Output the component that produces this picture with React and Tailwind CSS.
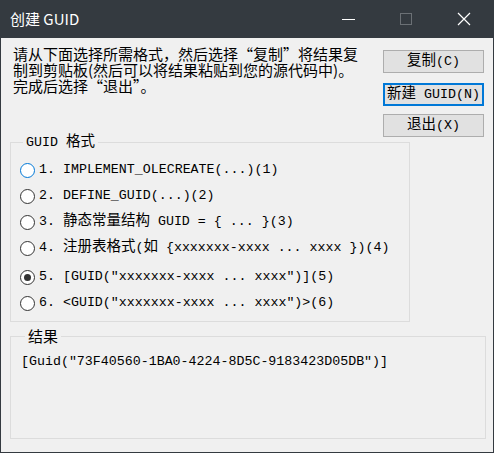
const MONO = "font-['Liberation_Mono','Noto_Sans_CJK_SC',monospace]";
const SANS = "font-['Noto_Sans_CJK_SC','Liberation_Sans',sans-serif]";

const ROWS = [
  { n: 1, label: <>IMPLEMENT_OLECREATE(...)(1)</> },
  { n: 2, label: <>DEFINE_GUID(...)(2)</> },
  { n: 3, label: <><span className="text-[14.5px]">静态常量结构</span> GUID = {'{'} ... {'}'}(3)</> },
  { n: 4, label: <><span className="text-[14.5px]">注册表格式</span>(<span className="text-[14.5px]">如</span> {'{'}xxxxxxx-xxxx ... xxxx {'}'})(4)</> },
  { n: 5, label: <>[GUID("xxxxxxx-xxxx ... xxxx")](5)</> },
  { n: 6, label: <>&lt;GUID("xxxxxxx-xxxx ... xxxx")&gt;(6)</> },
];

function Radio({ checked, hover }) {
  return (
    <span
      className={`w-[15px] h-[15px] rounded-full border bg-white flex items-center justify-center shrink-0 ${hover ? 'border-[#0078d7]' : 'border-[#333333]'}`}
    >
      {checked && <span className="w-[7px] h-[7px] rounded-full bg-[#333333]" />}
    </span>
  );
}

function Button({ children, focused }) {
  return (
    <div
      className={`w-[101px] h-[23px] flex items-center justify-center bg-[#e1e1e1] text-[13.3px] text-black ${MONO} ${focused ? 'border-2 border-[#0078d7]' : 'border border-[#adadad]'}`}
    >
      {children}
    </div>
  );
}

export default function App() {
  return (
    <div className="w-[494px] h-[453px] flex flex-col border-x border-b border-[#343a40] bg-[#f0f0f0]">
      {/* title bar */}
      <div className="h-[38px] bg-[#343a40] flex items-center justify-between shrink-0">
        <span className={`pl-[9px] text-white text-[15px] ${SANS}`}>创建 GUID</span>
        <div className="flex h-full">
          <div className="w-[58px] flex items-center justify-center">
            <span className="w-[13px] h-px bg-white" />
          </div>
          <div className="w-[58px] flex items-center justify-center">
            <span className="w-[12px] h-[12px] border border-[#6b7075]" />
          </div>
          <div className="w-[58px] flex items-center justify-center">
            <svg width="14" height="14" viewBox="0 0 14 14">
              <path d="M1 1L13 13M13 1L1 13" stroke="#ffffff" strokeWidth="1.2" />
            </svg>
          </div>
        </div>
      </div>

      {/* body */}
      <div className="flex-1 flex flex-col">
        <div className="h-[96px] flex justify-between">
          <div className={`pl-[12px] pt-[8px] text-[15px] leading-[16px] text-black whitespace-nowrap ${SANS}`}>
            <p>请从下面选择所需格式，然后选择“复制”将结果复</p>
            <p>制到剪贴板(然后可以将结果粘贴到您的源代码中)。</p>
            <p>完成后选择“退出”。</p>
          </div>
          <div className="mr-[9px] pt-[12px] flex flex-col">
            <Button>
              <span className="text-[14.5px]">复制</span>(C)
            </Button>
            <div className="mt-[10px]">
              <Button focused>
                <span className="text-[14.5px]">新建</span>&nbsp;GUID(N)
              </Button>
            </div>
            <div className="mt-[8px]">
              <Button>
                <span className="text-[14.5px]">退出</span>(X)
              </Button>
            </div>
          </div>
        </div>

        <fieldset className="ml-[9px] w-[400px] h-[188px] border border-[#dcdcdc]">
          <legend className={`ml-[12px] px-[3px] text-[13.3px] leading-[16px] text-black ${MONO}`}>
            GUID <span className="text-[14.5px]">格式</span>
          </legend>
          <div className="pl-[9px] pt-[6px] flex flex-col">
            {ROWS.map((r) => (
              <div
                key={r.n}
                className={`h-[26px] flex items-center gap-[4px] text-[13.3px] text-black whitespace-nowrap ${MONO} ${r.n === 5 ? 'mt-[3px]' : ''}`}
              >
                <Radio checked={r.n === 5} hover={r.n === 1} />
                <span>
                  {r.n}.&nbsp;{r.label}
                </span>
              </div>
            ))}
          </div>
        </fieldset>

        <fieldset className="mt-[6px] ml-[9px] w-[476px] h-[111px] border border-[#dcdcdc]">
          <legend className={`ml-[14px] px-[3px] text-[15px] leading-[16px] text-black ${SANS}`}>结果</legend>
          <div className={`pl-[10px] pt-[10px] text-[13.3px] leading-[16px] text-black whitespace-nowrap ${MONO}`}>
            [Guid("73F40560-1BA0-4224-8D5C-9183423D05DB")]
          </div>
        </fieldset>
      </div>
    </div>
  );
}
